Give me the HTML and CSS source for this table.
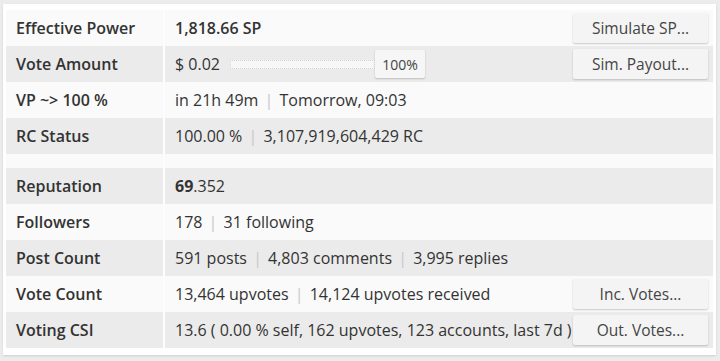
FILE: index.html
```html
<!DOCTYPE html>
<html>
<head>
<meta charset="utf-8">
<link rel="stylesheet" href="styles.css">
</head>
<body>
<div class="card">
  <div class="table">
    <div class="row">
      <div class="label">Effective Power</div>
      <div class="value"><span class="strong">1,818.66 SP</span></div>
      <div class="action"><button class="btn">Simulate SP...</button></div>
    </div>
    <div class="row alt">
      <div class="label">Vote Amount</div>
      <div class="value">
        <span>$ 0.02</span>
        <div class="slider"><div class="track"></div><div class="thumb">100%</div></div>
      </div>
      <div class="action"><button class="btn">Sim. Payout...</button></div>
    </div>
    <div class="row">
      <div class="label">VP ~&gt; 100 %</div>
      <div class="value">in 21h 49m <span class="sep">|</span> Tomorrow, 09:03</div>
    </div>
    <div class="row alt">
      <div class="label">RC Status</div>
      <div class="value">100.00 % <span class="sep">|</span> 3,107,919,604,429 RC</div>
    </div>
    <div class="row spacer">
      <div class="label"></div>
      <div class="value"></div>
    </div>
    <div class="row alt">
      <div class="label">Reputation</div>
      <div class="value"><span class="bold">69</span>.352</div>
    </div>
    <div class="row">
      <div class="label">Followers</div>
      <div class="value">178 <span class="sep">|</span> 31 following</div>
    </div>
    <div class="row alt">
      <div class="label">Post Count</div>
      <div class="value">591 posts <span class="sep">|</span> 4,803 comments <span class="sep">|</span> 3,995 replies</div>
    </div>
    <div class="row">
      <div class="label">Vote Count</div>
      <div class="value">13,464 upvotes <span class="sep">|</span> 14,124 upvotes received</div>
      <div class="action"><button class="btn">Inc. Votes...</button></div>
    </div>
    <div class="row alt">
      <div class="label">Voting CSI</div>
      <div class="value">13.6 ( 0.00 % self, 162 upvotes, 123 accounts, last 7d )</div>
      <div class="action"><button class="btn">Out. Votes...</button></div>
    </div>
  </div>
</div>
</body>
</html>
```
FILE: styles.css
```css
html, body {
  margin: 0;
  padding: 0;
}
body {
  background: #ececec;
  font-family: "Open Sans", "Liberation Sans", sans-serif;
  color: #333;
  width: 720px;
  height: 361px;
  overflow: hidden;
}
.card {
  background: #fff;
  margin: 4px 4px 0 3px;
  padding: 6px 3px 7px 3px;
  box-shadow: 0 1px 2px rgba(0,0,0,0.12);
}
.table {
  display: flex;
  flex-direction: column;
}
.row {
  display: grid;
  grid-template-columns: 159px 1fr auto;
  height: 36px;
  background: #fafafa;
}
.row.alt {
  background: #ebebeb;
}
.row.spacer {
  height: 14px;
}
.label {
  display: flex;
  align-items: center;
  padding-left: 10px;
  font-weight: 600;
  font-size: 16px;
  border-right: 2px solid #fdfdfd;
}
.value {
  display: flex;
  align-items: center;
  padding-left: 10px;
  font-size: 16px;
  white-space: pre;
  gap: 0;
}
.strong { font-weight: 600; }
.bold { font-weight: 700; }
.sep {
  color: #c8c8c8;
  margin: 0 2px;
}
.action {
  display: flex;
  align-items: center;
  padding-right: 5px;
}
.btn {
  font-family: "Open Sans", "Liberation Sans", sans-serif;
  font-size: 15.5px;
  color: #444;
  background: #f4f4f4;
  border: none;
  border-radius: 2px;
  box-shadow: 0 1px 2px rgba(0,0,0,0.2);
  width: 135px;
  height: 30px;
  padding: 0;
}
.slider {
  display: flex;
  align-items: center;
  margin-left: 10px;
}
.track {
  width: 143px;
  height: 7px;
  border: 1px dotted #d6d6d6;
  background: #f7f7f7;
}
.thumb {
  width: 50px;
  height: 28px;
  display: flex;
  align-items: center;
  justify-content: center;
  background: #f6f6f6;
  border-radius: 2px;
  box-shadow: 0 1px 2px rgba(0,0,0,0.2);
  font-size: 14px;
  color: #444;
}
```
